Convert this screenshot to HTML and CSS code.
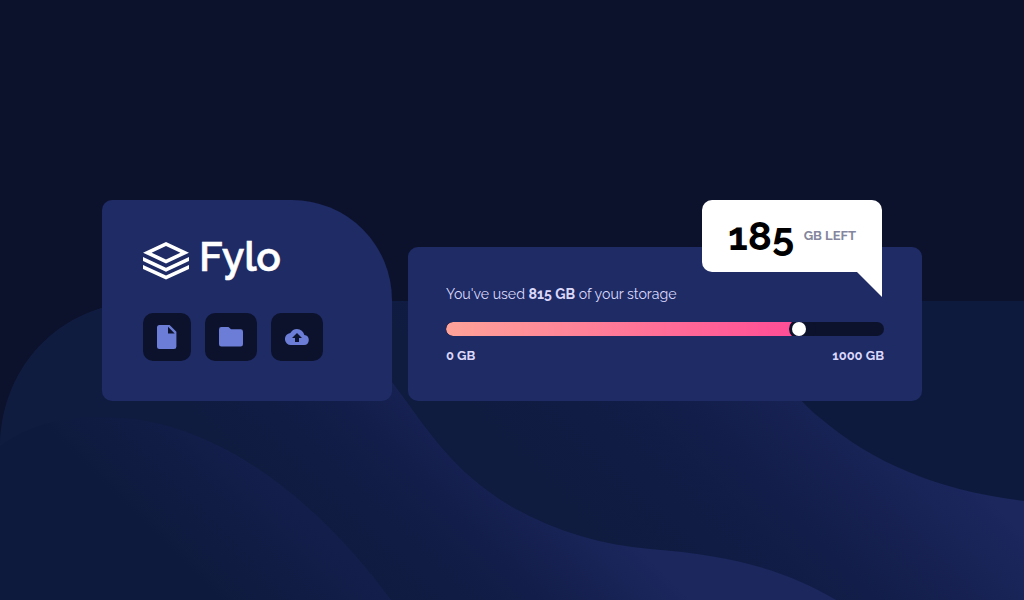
FILE: index.html
```html
<!DOCTYPE html>
<html lang="en">
<head>
<meta charset="utf-8">
<title>Fylo data storage</title>
<link rel="stylesheet" href="styles.css">
</head>
<body>
<svg class="backdrop" viewBox="0 301 1024 299" preserveAspectRatio="none" aria-hidden="true">
  <defs>
    <linearGradient id="middleFill" gradientUnits="userSpaceOnUse" x1="-110" y1="110" x2="45" y2="-45"><stop stop-color="#0f1b3f"/><stop offset=".5" stop-color="#121d49"/><stop offset="1" stop-color="#1b275d"/></linearGradient>
    <linearGradient id="rightFill" gradientUnits="userSpaceOnUse" x1="30" y1="-30" x2="245" y2="-245"><stop stop-color="#0f1b3f"/><stop offset=".5" stop-color="#121d49"/><stop offset="1" stop-color="#1b275d"/></linearGradient>
    <linearGradient id="leftFill" gradientUnits="userSpaceOnUse" x1="-190" y1="190" x2="-105" y2="105"><stop stop-color="#0e1a3d"/><stop offset="1" stop-color="#131e4b"/></linearGradient>
  </defs>
  <path d="M0 446C2 361 65 301 150 301H1024V600H0Z" fill="#0e1a3d"/>
  <path d="M380 301H718C775 365 787 391 820 418C875 465 942 491 1024 501V600H380Z" fill="url(#rightFill)"/>
  <path d="M0 446C2 361 65 301 150 301H300C345 323 371 352 392 382C431 434 451 470 512 507C555 531 601 545 650 549C729 555 784 569 836 600H0Z" fill="url(#middleFill)"/>
  <path d="M0 446C40 416 89 414 140 420C241 436 329 516 391 600H0Z" fill="url(#leftFill)"/>
</svg>
<main class="page">
  <section class="card brand-card">
    <div class="logo">
      <svg class="logo-mark" viewBox="0 0 46 38" aria-hidden="true">
        <path fill-rule="evenodd" d="M23 0L46 10.7L23 21.5L0 10.7ZM23 4L8.6 10.7L23 17.5L37.4 10.7Z"/>
        <path d="M0 15L23 25.7L46 15V19L23 29.7L0 19ZM0 22.9L23 33.6L46 22.9V26.9L23 37.6L0 26.9Z"/>
      </svg>
      <span class="logo-name">Fylo</span>
    </div>
    <div class="actions">
      <span class="action"><svg width="20" height="24" viewBox="0 0 20 24"><path fill-rule="evenodd" d="M2.5 0H12.6L19.4 6.8V21.5Q19.4 24 17 24H2.5Q0 24 0 21.5V2.5Q0 0 2.5 0ZM11 1.8V8.6H17.7Z"/></svg></span>
      <span class="action"><svg width="24" height="20" viewBox="0 0 24 20"><path d="M2.4 0H9.5L12 2.3H21.6Q24 2.3 24 4.7V17.2Q24 19.6 21.6 19.6H2.4Q0 19.6 0 17.2V2.4Q0 0 2.4 0Z"/></svg></span>
      <span class="action"><svg width="24" height="16" viewBox="0 0 24 16"><path fill-rule="evenodd" d="M19.35 6.04A7.49 7.49 0 0 0 12 0C9.11 0 6.6 1.64 5.35 4.04A5.994 5.994 0 0 0 6 16H19A5 5 0 0 0 19.35 6.04ZM14 9V13H10V9H7L12 4L17 9Z"/></svg></span>
    </div>
  </section>
  <section class="card storage-card">
    <p class="used">You've used <strong>815 GB</strong> of your storage</p>
    <div class="track"><div class="fill"><span class="knob"></span></div></div>
    <div class="limits"><span class="minimum">0 GB</span><span class="maximum">1000 GB</span></div>
    <div class="bubble"><span class="amount">185</span><span class="unit">GB LEFT</span></div>
  </section>
</main>
</body>
</html>
```
FILE: styles.css
```css
* { box-sizing: border-box; }
body {
  margin: 0;
  height: 100vh;
  overflow: hidden;
  background: #0c122c;
  font-family: Raleway, Lato, sans-serif;
}
.backdrop { position: absolute; left: 0; bottom: 0; width: 100%; height: 299px; }
.page {
  position: relative;
  height: 601px;
  display: flex;
  justify-content: center;
  align-items: flex-end;
  gap: 16px;
  padding-bottom: 200px;
}
.card { background: #1e2b65; border-radius: 10px; }
.brand-card { width: 290px; height: 201px; padding: 36px 41px; border-top-right-radius: 100px; }
.logo { display: flex; height: 49px; gap: 10px; color: #fff; }
.logo-mark { width: 46px; height: 38px; margin-top: 6px; fill: currentColor; }
.logo-name { font: 600 41px/42px Raleway, Lato, sans-serif; letter-spacing: -0.3px; -webkit-text-stroke: 0.5px #fff; }
.actions { display: flex; gap: 14px; margin-top: 28px; }
.action { height: 48px; padding: 0 14px; display: flex; align-items: center; border-radius: 10px; background: #0c122c; }
.action svg { display: block; fill: #6b7dd6; }
.storage-card { position: relative; width: 514px; height: 154px; padding: 37px 38px; color: #dcd8fb; }
.used { margin: 0; font-size: 14.13px; line-height: 20px; white-space: nowrap; }
.track { height: 14px; margin-top: 18px; border-radius: 7px; background: #0c122c; overflow: hidden; }
.fill { display: flex; justify-content: flex-end; width: 360px; height: 14px; border-radius: 7px; background: linear-gradient(90deg, #ffa399, #ff4a96); }
.knob { width: 14px; height: 14px; border-radius: 50%; background: #fff; box-shadow: 0 0 0 3px #0c122c, 7px 0 0 3px #0c122c; }
.limits { display: flex; justify-content: space-between; margin-top: 11px; font-size: 13px; font-weight: 700; line-height: 18px; }
.bubble {
  position: absolute;
  top: -47px;
  right: 40px;
  width: 180px;
  height: 72px;
  padding: 0 26px;
  display: flex;
  align-items: center;
  justify-content: space-between;
  border-radius: 10px 10px 0 10px;
  background: #fff;
}
.bubble::after { content: ""; position: absolute; right: 0; top: 100%; border-top: 25px solid #fff; border-left: 25px solid transparent; }
.amount { font-size: 40px; font-weight: 700; color: #000; line-height: 48px; }
.unit { padding-bottom: 2px; font-size: 13px; font-weight: 700; color: #83869c; white-space: nowrap; }
```
